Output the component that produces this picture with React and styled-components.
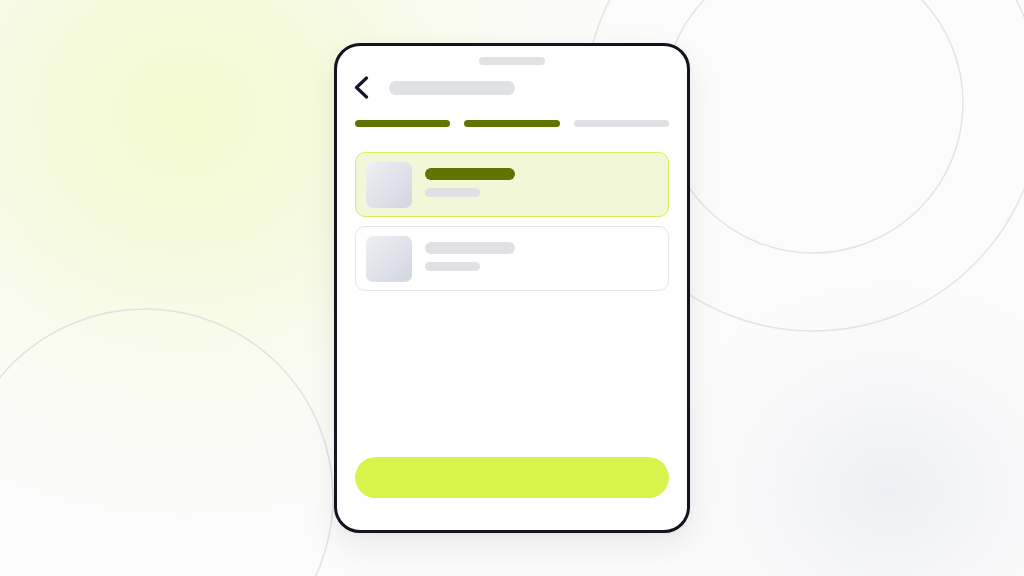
import React from "react";
import styled, { createGlobalStyle } from "styled-components";

const Global = createGlobalStyle`
  html, body { margin: 0; padding: 0; }
  body { font-family: "Inter", "Liberation Sans", sans-serif; }
  * { box-sizing: border-box; }
`;

const Stage = styled.div`
  position: relative;
  width: 1024px;
  height: 576px;
  overflow: hidden;
  display: flex;
  align-items: center;
  justify-content: center;
  background:
    radial-gradient(ellipse 460px 420px at 185px 115px, rgba(243, 250, 208, 1) 0%, rgba(245, 250, 218, 0.85) 35%, rgba(249, 252, 236, 0.45) 70%, rgba(252, 253, 248, 0) 100%),
    radial-gradient(ellipse 240px 210px at 890px 490px, rgba(236, 238, 243, 0.9) 0%, rgba(242, 243, 246, 0.5) 50%, rgba(250, 250, 252, 0) 100%),
    #fcfcfc;
`;

const Decor = styled.svg`
  position: absolute;
  inset: 0;
  width: 1024px;
  height: 576px;
  pointer-events: none;
`;

const Phone = styled.div`
  position: relative;
  z-index: 1;
  width: 356px;
  height: 490px;
  border: 3px solid #12131f;
  border-radius: 26px;
  background: #ffffff;
  box-shadow: 0 14px 34px rgba(20, 20, 40, 0.08), 0 2px 8px rgba(20, 20, 40, 0.04);
  display: flex;
  flex-direction: column;
  padding: 11px 18px 32px 18px;
`;

const Notch = styled.div`
  align-self: center;
  width: 66px;
  height: 8px;
  border-radius: 4px;
  background: #e1e2e6;
`;

const Header = styled.div`
  margin-top: 12px;
  height: 22px;
  display: flex;
  align-items: center;
  gap: 20px;
`;

const Pill = styled.div`
  width: ${(p) => p.$w}px;
  height: ${(p) => p.$h}px;
  border-radius: ${(p) => p.$h / 2}px;
  background: ${(p) => (p.$dark ? "#5f7401" : "#e0e1e5")};
`;

const Progress = styled.div`
  margin-top: 21px;
  display: flex;
  gap: 14px;
`;

const Step = styled.div`
  flex: 1;
  height: 7px;
  border-radius: 4px;
  background: ${(p) => (p.$done ? "#5f7401" : "#e0e1e4")};
`;

const List = styled.div`
  margin-top: 25px;
  display: flex;
  flex-direction: column;
  gap: 9px;
`;

const Card = styled.div`
  height: 65px;
  border-radius: 10px;
  border: 1.5px solid ${(p) => (p.$active ? "#d8ef5a" : "#e6e6e9")};
  background: ${(p) => (p.$active ? "#f2f8d7" : "#ffffff")};
  display: flex;
  align-items: flex-start;
  gap: 13px;
  padding: 8.5px 10px;
`;

const Thumb = styled.div`
  width: 46px;
  height: 46px;
  border-radius: 7px;
  background: linear-gradient(135deg, #eef0f4 0%, #dde0e8 60%, #d2d6df 100%);
`;

const Lines = styled.div`
  margin-top: 6px;
  display: flex;
  flex-direction: column;
  gap: 8px;
`;

const Spacer = styled.div`
  flex: 1;
`;

const CTA = styled.div`
  height: 41px;
  border-radius: 21px;
  background: #d9f34d;
`;

const Chevron = () => (
  <svg width="16" height="24" viewBox="0 0 16 24" style={{ marginLeft: "-2px", marginTop: "-1px" }}>
    <path d="M13.5 2 L3.5 11.5 L13.5 21" fill="none" stroke="#151628" strokeWidth="3.2" strokeLinecap="round" strokeLinejoin="round" />
  </svg>
);

const Item = ({ active }) => (
  <Card $active={active}>
    <Thumb />
    <Lines>
      <Pill $w={90} $h={12} $dark={active} />
      <Pill $w={55} $h={9} />
    </Lines>
  </Card>
);

export default function App() {
  return (
    <>
      <Global />
      <Stage>
        <Decor viewBox="0 0 1024 576">
          <circle cx="813" cy="103" r="150" fill="none" stroke="#e4e4e4" strokeWidth="1.5" />
          <circle cx="813" cy="103" r="228" fill="none" stroke="#e4e4e4" strokeWidth="1.5" />
          <circle cx="145" cy="497" r="188" fill="none" stroke="#e2e2e2" strokeWidth="1.5" />
        </Decor>
        <Phone>
          <Notch />
          <Header>
            <Chevron />
            <Pill $w={126} $h={14} />
          </Header>
          <Progress>
            <Step $done />
            <Step $done />
            <Step />
          </Progress>
          <List>
            <Item active />
            <Item />
          </List>
          <Spacer />
          <CTA />
        </Phone>
      </Stage>
    </>
  );
}
